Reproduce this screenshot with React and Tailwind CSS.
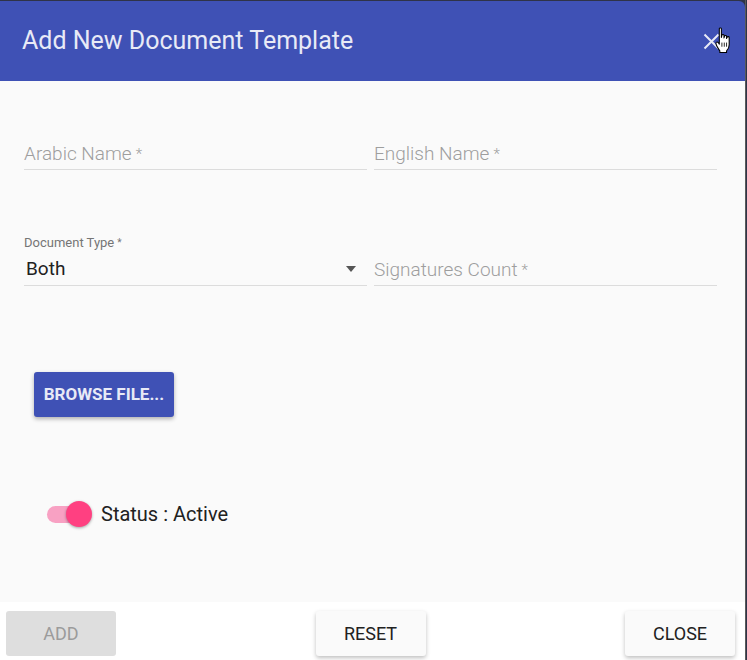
import React, { useState } from "react";

const TextField = ({ label }) => (
  <div className="flex-1 border-b border-[#dcdcdc] pb-[2px]">
    <span className="text-[19px] leading-[24px] text-[#9e9e9e] font-light">
      {label}
      <span className="ml-[4px] text-[15px] align-top">*</span>
    </span>
  </div>
);

const FooterButton = ({ children, disabled }) => (
  <button
    className={
      disabled
        ? "w-[110px] h-[45px] rounded-[3px] bg-[#dedede] text-[18px] text-[#9b9b9b]"
        : "w-[110px] h-[45px] rounded-[3px] bg-[#fafafa] text-[18px] text-[#212121] shadow-[0_2px_4px_rgba(0,0,0,0.25)]"
    }
  >
    {children}
  </button>
);

// pointer cursor as seen over the close icon
const HandCursor = () => (
  <svg width="19" height="27" viewBox="0 0 18 26" className="absolute left-[715px] top-[27px]">
    <path
      d="M4 1.5 C4 0.7 6 0.7 6 1.5 L6 10 L6.5 8 C6.5 7 8.5 7 8.5 8 L8.5 10.5 L9 9 C9 8 11 8 11 9 L11 11 L11.5 10 C11.5 9 13.5 9 13.5 10 L13.5 17 C13.5 20 12 22 11 23 L11 24.5 L4.5 24.5 L4.5 23 C3.5 21.5 1 18 0.8 16 C0.5 14.5 2 14 3 15 L4 16.5 Z"
      fill="#fff"
      stroke="#000"
      strokeWidth="1"
      strokeLinejoin="round"
    />
    <path d="M6.5 15 L6.5 19 M8.8 15 L8.8 19 M11 15 L11 19" stroke="#000" strokeWidth="0.8" />
  </svg>
);

export default function App() {
  const [active, setActive] = useState(true);

  return (
    <div className="relative w-[747px] h-[660px] bg-[#2f3348] font-['Roboto',sans-serif]">
      <div className="w-[746px] h-[660px] pt-[1px] border-r border-[#5a5a5a] flex flex-col">
        {/* header */}
        <div className="h-[80px] bg-[#3f51b5] rounded-tr-[6px] flex items-center justify-between pl-[22px] pr-[25px]">
          <h1 className="text-[25px] text-[#e8eaf6]">Add New Document Template</h1>
          <svg width="17" height="17" viewBox="0 0 17 17" className="mt-[1px]">
            <path d="M1.5 1.5 L15.5 15.5 M15.5 1.5 L1.5 15.5" stroke="#e8eaf6" strokeWidth="2" />
          </svg>
        </div>

        {/* body */}
        <div className="flex-1 bg-[#fafafa] pl-[24px] pr-[28px] pt-[61px]">
          <div className="flex gap-[7px]">
            <TextField label="Arabic Name" />
            <TextField label="English Name" />
          </div>

          <div className="flex gap-[7px] mt-[65px] items-end">
            <div className="flex-1 border-b border-[#dcdcdc] pb-[4px]">
              <div className="text-[13px] leading-[16px] text-[#757575]">
                Document Type<span className="ml-[3px] text-[10px] align-top">*</span>
              </div>
              <div className="flex items-center justify-between mt-[6px]">
                <span className="text-[19px] leading-[24px] text-[#212121] ml-[2px]">Both</span>
                <svg width="10" height="6" viewBox="0 0 10 6" className="mr-[11px]">
                  <path d="M0 0 L10 0 L5 6 Z" fill="#555" />
                </svg>
              </div>
            </div>
            <div className="flex-1 border-b border-[#dcdcdc] pb-[2px]">
              <span className="text-[19px] leading-[24px] text-[#9e9e9e] font-light">
                Signatures Count
                <span className="ml-[4px] text-[15px] align-top">*</span>
              </span>
            </div>
          </div>

          <button className="mt-[86px] ml-[10px] w-[140px] h-[45px] rounded-[3px] bg-[#3f51b5] text-[#e8eaf6] text-[17px] font-bold shadow-[0_2px_4px_rgba(0,0,0,0.3)]">
            BROWSE FILE...
          </button>

          <div className="flex items-center mt-[82px] ml-[23px]">
            <button
              onClick={() => setActive(!active)}
              className="relative w-[44px] h-[26px] flex items-center"
            >
              <span className="w-[38px] h-[17px] rounded-full bg-[#f8a1c3]" />
              <span className="absolute left-[19px] top-0 w-[26px] h-[26px] rounded-full bg-[#ff4081] shadow-[0_1px_3px_rgba(0,0,0,0.35)]" />
            </button>
            <span className="ml-[10px] text-[20px] text-[#212121]">
              Status : {active ? "Active" : "Inactive"}
            </span>
          </div>
        </div>

        {/* footer */}
        <div className="h-[58px] bg-white flex items-start justify-between pl-[6px] pr-[10px] pt-[9px]">
          <FooterButton disabled>ADD</FooterButton>
          <FooterButton>RESET</FooterButton>
          <FooterButton>CLOSE</FooterButton>
        </div>
      </div>
      <HandCursor />
    </div>
  );
}
